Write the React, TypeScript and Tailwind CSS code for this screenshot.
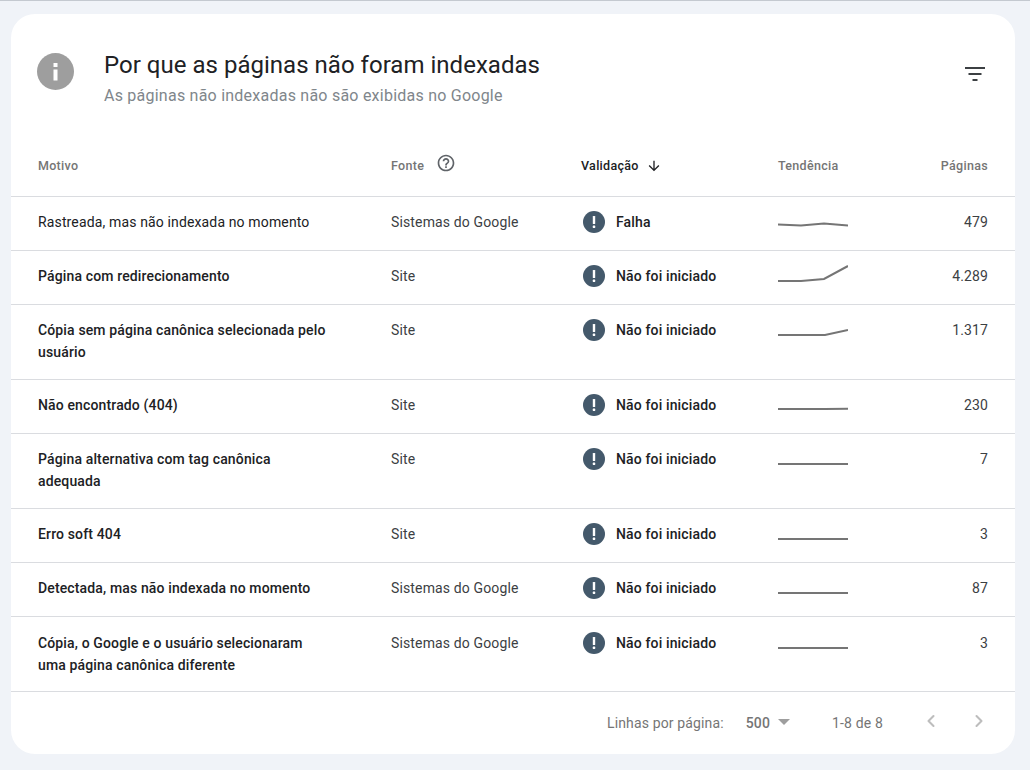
import { ChevronLeft, ChevronRight } from "lucide-react";

type Row = {
  motivo: string;
  fonte: string;
  validacao: string;
  paginas: string;
  trend: string;
  regular?: boolean;
  nudge?: boolean;
};

const rows: Row[] = [
  {
    motivo: "Rastreada, mas não indexada no momento",
    fonte: "Sistemas do Google",
    validacao: "Falha",
    paginas: "479",
    trend: "0,15.5 23,16.5 46,14.5 70,16.5",
    regular: true,
  },
  {
    motivo: "Página com redirecionamento",
    fonte: "Site",
    validacao: "Não foi iniciado",
    paginas: "4.289",
    trend: "0,18 23,18 46,16 70,3",
  },
  {
    motivo: "Cópia sem página canônica selecionada pelo usuário",
    fonte: "Site",
    validacao: "Não foi iniciado",
    paginas: "1.317",
    trend: "0,18 23,18 47,18 70,13",
  },
  {
    motivo: "Não encontrado (404)",
    fonte: "Site",
    validacao: "Não foi iniciado",
    paginas: "230",
    trend: "0,17 23,17 47,17 70,16.7",
  },
  {
    motivo: "Página alternativa com tag canônica adequada",
    fonte: "Site",
    validacao: "Não foi iniciado",
    paginas: "7",
    trend: "0,18 70,18",
  },
  {
    motivo: "Erro soft 404",
    fonte: "Site",
    validacao: "Não foi iniciado",
    paginas: "3",
    trend: "0,18 70,18",
  },
  {
    motivo: "Detectada, mas não indexada no momento",
    fonte: "Sistemas do Google",
    validacao: "Não foi iniciado",
    paginas: "87",
    trend: "0,18 70,18",
  },
  {
    motivo: "Cópia, o Google e o usuário selecionaram uma página canônica diferente",
    fonte: "Sistemas do Google",
    validacao: "Não foi iniciado",
    paginas: "3",
    trend: "0,18 70,18",
    nudge: true,
  },
];

const gridCols = "grid grid-cols-[353px_190px_197px_70px_1fr] pl-[27px] pr-[27px]";

function AlertIcon() {
  return (
    <svg width="22" height="22" viewBox="0 0 22 22" className="shrink-0">
      <circle cx="11" cy="11" r="11" fill="#44596b" />
      <rect x="9.8" y="5" width="2.4" height="8" rx="0.6" fill="#fff" />
      <rect x="9.8" y="14.6" width="2.4" height="2.4" rx="0.6" fill="#fff" />
    </svg>
  );
}

function InfoIcon() {
  return (
    <svg width="37" height="37" viewBox="0 0 37 37" className="shrink-0">
      <circle cx="18.5" cy="18.5" r="18.5" fill="#9e9e9e" />
      <rect x="16.5" y="10" width="4" height="4" fill="#fff" />
      <rect x="16.5" y="16.5" width="4" height="11" fill="#fff" />
    </svg>
  );
}

function FilterIcon() {
  return (
    <svg width="20" height="14" viewBox="0 0 20 14" fill="#3c4043">
      <rect x="0" y="0" width="20" height="2" />
      <rect x="3.5" y="6" width="13" height="2" />
      <rect x="7.5" y="12" width="5" height="2" />
    </svg>
  );
}

function HelpIcon() {
  return (
    <svg width="20" height="20" viewBox="0 0 24 24" fill="#5f6368">
      <path d="M11 18h2v-2h-2v2zm1-16C6.48 2 2 6.48 2 12s4.48 10 10 10 10-4.48 10-10S17.52 2 12 2zm0 18c-4.41 0-8-3.59-8-8s3.59-8 8-8 8 3.59 8 8-3.59 8-8 8zm0-14c-2.21 0-4 1.79-4 4h2c0-1.1.9-2 2-2s2 .9 2 2c0 2-3 1.75-3 5h2c0-2.25 3-2.5 3-5 0-2.21-1.79-4-4-4z" />
    </svg>
  );
}

function ArrowDown() {
  return (
    <svg width="16" height="16" viewBox="0 0 24 24" fill="#202124">
      <path d="M20 12l-1.41-1.41L13 16.17V4h-2v12.17l-5.58-5.59L4 12l8 8 8-8z" />
    </svg>
  );
}

export default function App() {
  return (
    <div className="h-[770px] w-[1030px] overflow-hidden border-t border-[#c4c9d0] bg-[#f0f3f8] pl-[11px] pt-[13px] font-['Roboto',sans-serif]">
      <div className="h-[740px] w-[1004px] rounded-[24px] bg-white">
        <div className="flex h-[126px] items-start pl-[26px] pr-[30px] pt-[39px]">
          <InfoIcon />
          <div className="ml-[30px] flex-1">
            <div className="text-[24px] leading-[24px] tracking-[0.02px] text-[#202124]">
              Por que as páginas não foram indexadas
            </div>
            <div className="mt-[7px] text-[16px] leading-[24px] tracking-[0.235px] text-[#80868b]">
              As páginas não indexadas não são exibidas no Google
            </div>
          </div>
          <div className="mt-[14px]">
            <FilterIcon />
          </div>
        </div>

        <div className={`${gridCols} h-[57px] items-center border-b border-[#dadce0] pb-[4px] text-[12.5px] font-medium tracking-[0.3px] text-[#757575]`}>
          <div>Motivo</div>
          <div className="flex items-center gap-[12px]">
            Fonte
            <span className="-mt-[6px]">
              <HelpIcon />
            </span>
          </div>
          <div className="flex items-center gap-[7px] text-[#202124]">
            Validação
            <ArrowDown />
          </div>
          <div>Tendência</div>
          <div className="text-right">Páginas</div>
        </div>

        {rows.map((row) => (
          <div
            key={row.motivo}
            className={`${gridCols} min-h-[54px] items-start border-b border-[#dadce0] text-[14px] leading-[22px] tracking-[0.14px] text-[#202124] ${row.nudge ? "pt-[1px]" : ""}`}
          >
            <div className={`max-w-[292px] pt-[14px] ${row.nudge ? "pb-[15px]" : "pb-[16px]"} ${row.regular ? "" : "font-medium"}`}>
              {row.motivo}
            </div>
            <div className="pt-[14px] text-[#3c4043]">{row.fonte}</div>
            <div className="flex items-center gap-[11px] pl-[2px] pt-[14px] font-medium">
              <AlertIcon />
              {row.validacao}
            </div>
            <div className="pt-[12px]">
              <svg width="70" height="22" viewBox="0 0 70 22" fill="none">
                <polyline points={row.trend} stroke="#757575" strokeWidth="2" />
              </svg>
            </div>
            <div className="pt-[14px] text-right text-[#3c4043]">{row.paginas}</div>
          </div>
        ))}

        <div className="flex h-[62px] items-center pl-[596px] text-[14px] tracking-[0.14px] text-[#757575]">
          <span>Linhas por página:</span>
          <span className="ml-[22px] font-medium">500</span>
          <span className="-mt-[2px] ml-[8px] h-0 w-0 border-x-[6px] border-t-[6px] border-x-transparent border-t-[#9e9e9e]" />
          <span className="ml-[42px]">1-8 de 8</span>
          <ChevronLeft strokeWidth={2.5} className="-mt-[4px] ml-[38px] h-[20px] w-[20px] text-[#bdbdbd]" />
          <ChevronRight strokeWidth={2.5} className="-mt-[4px] ml-[28px] h-[20px] w-[20px] text-[#bdbdbd]" />
        </div>
      </div>
    </div>
  );
}
